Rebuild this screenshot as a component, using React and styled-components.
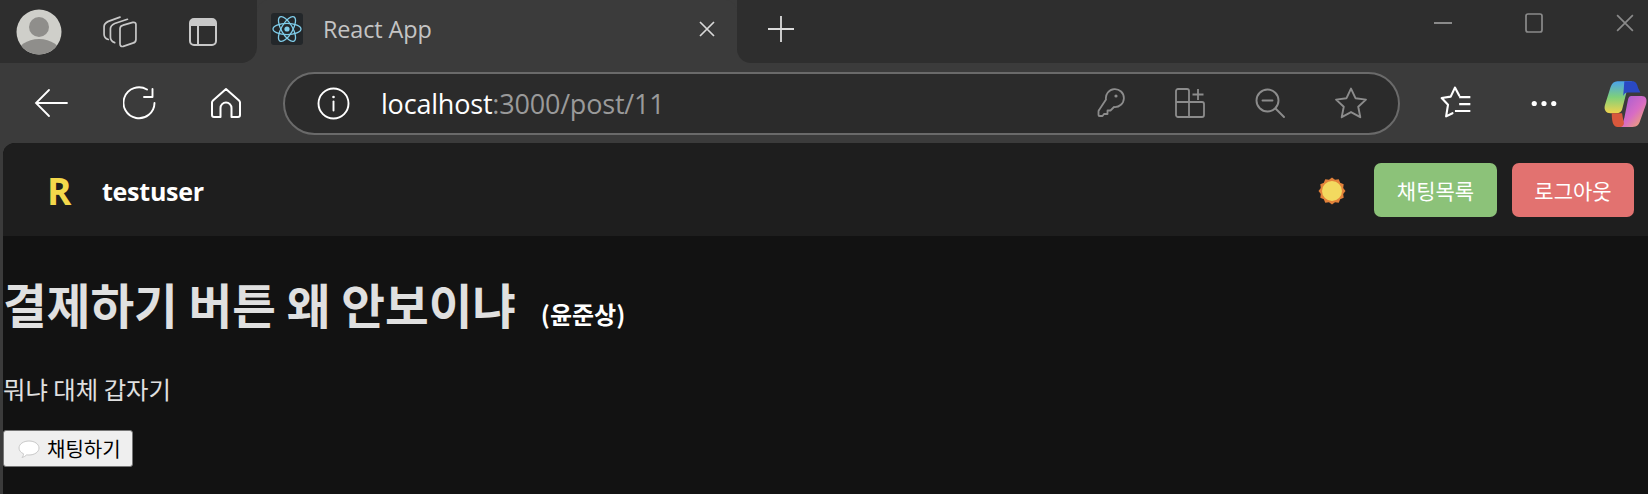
import React from "react";
import styled, { createGlobalStyle } from "styled-components";

const Global = createGlobalStyle`
  html, body { margin: 0; padding: 0; background: #3b3b3b; }
  body { font-family: "Noto Sans CJK KR", "Noto Sans", sans-serif; }
`;
const Window = styled.div`width: 1648px; height: 494px; overflow: hidden; display: flex; flex-direction: column; background: #3b3b3b;`;
const TabStrip = styled.div`height: 63px; flex: none; display: flex; align-items: stretch; background: #3b3b3b;`;
const StripLeft = styled.div`width: 257px; flex: none; background: #2e2e2e; border-bottom-right-radius: 16px; display: flex; align-items: center;`;
const StripIcon = styled.span`display: flex; margin-left: ${p => p.$ml}px;`;
const Tab = styled.div`width: 480px; flex: none; background: #3b3b3b; border-top-left-radius: 12px; border-top-right-radius: 12px; display: flex; align-items: center; padding: 0 22px 0 14px; box-sizing: border-box;`;
const Favicon = styled.span`width: 32px; height: 32px; margin-top: -6px; border-radius: 3px; background: #23272a; display: flex; align-items: center; justify-content: center;`;
const TabTitle = styled.span`font: 23.4px "Open Sans", sans-serif; color: #c4c4c4; margin-left: 20px; margin-top: -6px; flex: 1; letter-spacing: -0.1px;`;
const StripRight = styled.div`flex: 1; background: #2e2e2e; border-bottom-left-radius: 14px; display: flex; align-items: flex-start; position: relative;`;
const Toolbar = styled.div`height: 80px; flex: none; background: #3b3b3b; display: flex; align-items: center;`;
const ToolIcon = styled.span`display: flex; margin-left: ${p => p.$ml}px;`;
const Omnibox = styled.div`width: 1117px; height: 63px; margin-left: 42px; box-sizing: border-box; border: 2px solid #6a6a6a; border-radius: 32px; background: #2b2b2b; display: flex; align-items: center; padding-left: 32px;`;
const Url = styled.span`font: 27px "Open Sans", sans-serif; color: #fff; margin-left: 31px; flex: 1; letter-spacing: -0.2px;`;
const UrlDim = styled.span`color: #9a9a9a;`;
const Page = styled.div`flex: 1; margin-left: 3px; background: #121212; border-top-left-radius: 12px; overflow: hidden; display: flex; flex-direction: column;`;
const Header = styled.header`height: 93px; flex: none; background: #1e1e1e; display: flex; align-items: center; padding: 0 14px 0 44px; box-sizing: border-box;`;
const Logo = styled.span`font: 700 37px "Open Sans", sans-serif; color: #f4d84b; width: 55px; margin-top: 2px;`;
const User = styled.span`font: 700 25px "Open Sans", sans-serif; color: #fff; flex: 1; letter-spacing: -0.25px; margin-top: 2px;`;
const Sun = styled.span`display: flex; margin: 2px 28px 0 0;`;
const NavButton = styled.button`height: 54px; width: ${p => p.$w}px; margin-left: ${p => p.$ml}px; border: 0; border-radius: 7px; background: ${p => p.$bg}; color: #fff; font: 400 21px "Noto Sans CJK KR", sans-serif; padding: 0;`;
const Main = styled.main`padding: 0;`;
const Title = styled.h1`margin: 39px 0 0; font: 700 47.5px/58px "Noto Sans CJK KR", sans-serif; color: #e0e0e0; white-space: nowrap;`;
const Author = styled.small`font: 700 24px "Noto Sans CJK KR", sans-serif; color: #fff; margin-left: 14px;`;
const Body = styled.p`margin: 40px 0 0; font: 400 24.4px/32px "Noto Sans CJK KR", sans-serif; color: #e0e0e0;`;
const ChatButton = styled.button`margin-top: 25px; width: 130px; height: 37px; display: flex; align-items: center; padding: 0 0 0 14px; box-sizing: border-box; background: #efefef; border: 1px solid #767676; border-radius: 3px; color: #000; font: 400 20px "Noto Sans CJK KR", sans-serif; gap: 7px;`;

const S = { fill: "none", stroke: "currentColor", strokeLinecap: "round", strokeLinejoin: "round" };

const Avatar = () => <svg width="46" height="46" viewBox="0 0 46 46"><defs><clipPath id="av"><circle cx="23" cy="23" r="22.5" /></clipPath></defs><circle cx="23" cy="23" r="22.5" fill="#cfcfca" /><g clipPath="url(#av)"><circle cx="23" cy="18" r="10" fill="#8f8e8b" /><ellipse cx="23" cy="45" rx="22" ry="15" fill="#8f8e8b" /></g></svg>;
const Workspaces = () => <svg width="34" height="34" viewBox="1 2 32 30" style={{ color: "#c8c8c8" }} {...S} strokeWidth="1.6"><path d="M6 24 C3 23 2 21 2 19 V12 C2 9 4 8 6 7 L17 3 " /><path d="M12 27 C9 26 8 24 8 22 V14 C8 11 10 10 12 9 L24 5" /><path d="M17 14 C17 12 18 11 20 10.5 L29 8 C31.5 7.5 32 9 32 10 V24 C32 26 31 27 29 27.5 L20 30.5 C18 31 17 30 17 28 Z" /></svg>;
const Sidebar = () => <svg width="28" height="28" viewBox="0 0 28 28"><rect x="1" y="1" width="26" height="26" rx="4" fill="none" stroke="#c8c8c8" strokeWidth="2" /><path d="M1 5a4 4 0 0 1 4-4h18a4 4 0 0 1 4 4v3H1z" fill="#c8c8c8" /><path d="M9 8v19" stroke="#c8c8c8" strokeWidth="2" /></svg>;
const ReactIcon = () => <svg width="30" height="30" viewBox="-15 -15 30 30" fill="none" stroke="#7fcdea" strokeWidth="1.3"><ellipse rx="14" ry="5.6" /><ellipse rx="14" ry="5.6" transform="rotate(60)" /><ellipse rx="14" ry="5.6" transform="rotate(120)" /><circle r="2.6" fill="#7fcdea" stroke="none" /></svg>;
const CloseX = ({ size = 16, color = "#d8d8d8", w = 1.7 }) => <svg width={size} height={size} viewBox="0 0 16 16" stroke={color} strokeWidth={w}><path d="M1 1l14 14M15 1L1 15" /></svg>;
const Plus = () => <svg width="28" height="28" viewBox="0 0 28 28" stroke="#dcdcdc" strokeWidth="1.8"><path d="M14 1v26M1 14h26" /></svg>;
const Back = () => <svg width="34" height="30" viewBox="0 0 34 30" stroke="#fff" strokeWidth="1.8" fill="none" strokeLinecap="round"><path d="M33 15H2M15 2L2 15l13 13" /></svg>;
const Reload = () => <svg width="34" height="34" viewBox="0 0 34 34" stroke="#fff" strokeWidth="1.9" fill="none" strokeLinecap="round" strokeLinejoin="round"><path d="M24 3.500A15.500 15.500 0 1 0 31.500 17" /><path d="M29.500 3v8H21" /></svg>;
const Home = () => <svg width="30" height="32" viewBox="0 0 30 32" stroke="#fff" strokeWidth="2" fill="none" strokeLinejoin="round"><path d="M15 2L2 13.500a3 3 0 0 0-1 2.500V28a2 2 0 0 0 2 2h6.500V21a5.500 5.500 0 0 1 11 0v9H27a2 2 0 0 0 2-2V16a3 3 0 0 0-1-2.500z" /></svg>;
const Info = () => <svg width="33" height="33" viewBox="0 0 33 33" fill="none" stroke="#fff" strokeWidth="1.9"><circle cx="16.500" cy="16.500" r="15" /><path d="M16.500 14.500v9" strokeLinecap="round" /><circle cx="16.500" cy="10" r="1.300" fill="#fff" stroke="none" /></svg>;
const Key = () => <svg width="28" height="30" viewBox="0 0 28 30" fill="none" stroke="#8c8c8c" strokeWidth="1.800" strokeLinejoin="round"><path d="M9 11.500a9 9 0 1 1 8 7.500l-3.500 3.500H10.500V26H7l-1.500 2H2.500a1 1 0 0 1-1-1v-3.500a2 2 0 0 1 .6-1.500z" /><circle cx="19" cy="8" r="1.600" fill="#8c8c8c" stroke="none" /></svg>;
const Apps = () => <svg width="30" height="30" viewBox="0 0 30 30" fill="none" stroke="#8c8c8c" strokeWidth="1.800"><path d="M3 1h9a2 2 0 0 1 2 2v11H1V3a2 2 0 0 1 2-2zM1 14h13v15H3a2 2 0 0 1-2-2zM14 14h13a2 2 0 0 1 2 2v11a2 2 0 0 1-2 2H14z" /><path d="M23 1v11M17.500 6.500h11" /></svg>;
const ZoomOut = () => <svg width="30" height="30" viewBox="0 0 30 30" fill="none" stroke="#8c8c8c" strokeWidth="1.900" strokeLinecap="round"><circle cx="12.500" cy="12.500" r="11" /><path d="M7.500 12.500h10M20.500 20.500l8.500 8.500" /></svg>;
const Star = ({ color = "#8c8c8c" }) => <svg width="32" height="32" viewBox="0 0 30 30" fill="none" stroke={color} strokeWidth="1.800" strokeLinejoin="round"><path d="M15 1.500l4.200 9 9.800 1.300-7.200 6.700 1.900 9.800L15 23.500l-8.700 4.800 1.900-9.800L1 11.800l9.800-1.300z" /></svg>;
const Favs = () => <svg width="32" height="34" viewBox="0 0 30 32" fill="none" stroke="#fff" strokeWidth="2" strokeLinejoin="round"><path d="M14 1.500l-4 8.500-8.500 1.300 6 6.300-1.800 11 6-3M14 1.500l4 7.500" strokeLinecap="round" /><path d="M18 10.500h10.500M18 17h10.500M14 23.500h14.500" /></svg>;
const More = () => <svg width="26" height="7" viewBox="0 0 24 6" fill="#fff"><circle cx="3" cy="3" r="2.400" /><circle cx="12" cy="3" r="2.400" /><circle cx="21" cy="3" r="2.400" /></svg>;
const Copilot = () => <svg width="45" height="47" viewBox="0 0 38 41"><defs><linearGradient id="cpl" x1="0" y1="0" x2="0" y2="1"><stop offset="0" stopColor="#4aa3ee" /><stop offset=".5" stopColor="#7fd07a" /><stop offset="1" stopColor="#f0d34e" /></linearGradient><linearGradient id="cpr" x1="0" y1="0" x2="1" y2="1"><stop offset="0" stopColor="#9b5bd6" /><stop offset=".55" stopColor="#d86cc4" /><stop offset="1" stopColor="#f5b55a" /></linearGradient></defs><path d="M12 1h13c-3 2-4 5-5 9l-4 16c-1 2-2 3-5 3H6c-4 0-6-3-5-7l5-16c1-3 3-5 6-5z" fill="url(#cpl)" /><path d="M18 1h7c3 0 4 2 5 6l2 4h-11c-2 0-3 1-4 3z" fill="#2a49c4" /><path d="M24 14h9c4 0 5 3 4 7l-5 14c-1 4-3 6-7 6H13c3-2 4-4 5-8l3-15c.5-3 1.500-4 3-4z" fill="url(#cpr)" /><path d="M7 29h9l1 6c1 3 1 5-2 6h-3c-3 0-5-3-5-12z" fill="#d8583c" /></svg>;
const SunIcon = () => {
  const n = 12, pts = [];
  for (let i = 0; i < n * 2; i++) { const r = i % 2 ? 11.6 : 13.5; const a = i * Math.PI / n; pts.push(`${14 + r * Math.cos(a)},${14 + r * Math.sin(a)}`); }
  return <svg width="28" height="28" viewBox="0 0 28 28"><polygon points={pts.join(" ")} fill="#e3823a" /><circle cx="14" cy="14" r="10" fill="#f3d95f" /></svg>;
};
const Bubble = () => <svg width="22" height="20" viewBox="0 0 22 20"><path d="M11 2c5.500 0 10 3 10 7s-4.500 7-10 7c-.8 0-1.500 0-2.200-.2C7.500 17 6 18 4 18.500c1-1.200 1.500-2.300 1.500-3.700C2.800 13.500 1 11.500 1 9c0-4 4.500-7 10-7z" fill="#fff" stroke="#c9c9c9" strokeWidth="1" /></svg>;

const WinControls = styled.div`position: absolute; top: 13px; right: 0; display: flex; align-items: center; height: 20px;`;
const TabClose = styled.span`display: flex; margin-top: -6px;`;
const NewTab = styled.span`display: flex; margin: 15px 0 0 30px;`;
const WinBtn = styled.span`display: flex; margin-right: ${p => p.$mr}px;`;

export default function App() {
  return (
    <Window>
      <Global />
      <TabStrip>
        <StripLeft>
          <StripIcon $ml={16}><Avatar /></StripIcon>
          <StripIcon $ml={41}><Workspaces /></StripIcon>
          <StripIcon $ml={52}><Sidebar /></StripIcon>
        </StripLeft>
        <Tab>
          <Favicon><ReactIcon /></Favicon>
          <TabTitle>React App</TabTitle>
          <TabClose><CloseX /></TabClose>
        </Tab>
        <StripRight>
          <NewTab><Plus /></NewTab>
          <WinControls>
            <WinBtn $mr={73}><svg width="18" height="2" viewBox="0 0 18 2"><path d="M0 1h18" stroke="#8a8a8a" strokeWidth="2" /></svg></WinBtn>
            <WinBtn $mr={73}><svg width="18" height="20" viewBox="0 0 18 20"><rect x="1" y="1" width="16" height="18" rx="2" fill="none" stroke="#8a8a8a" strokeWidth="1.700" /></svg></WinBtn>
            <WinBtn $mr={14}><CloseX size={18} color="#8a8a8a" w={1.500} /></WinBtn>
          </WinControls>
        </StripRight>
      </TabStrip>
      <Toolbar>
        <ToolIcon $ml={34}><Back /></ToolIcon>
        <ToolIcon $ml={55}><Reload /></ToolIcon>
        <ToolIcon $ml={54}><Home /></ToolIcon>
        <Omnibox>
          <Info />
          <Url>localhost<UrlDim>:3000/post/11</UrlDim></Url>
          <ToolIcon $ml={0}><Key /></ToolIcon>
          <ToolIcon $ml={50}><Apps /></ToolIcon>
          <ToolIcon $ml={50}><ZoomOut /></ToolIcon>
          <ToolIcon $ml={50}><Star /></ToolIcon>
          <ToolIcon $ml={31}><span /></ToolIcon>
        </Omnibox>
        <ToolIcon $ml={40}><Favs /></ToolIcon>
        <ToolIcon $ml={59}><More /></ToolIcon>
        <ToolIcon $ml={46}><Copilot /></ToolIcon>
      </Toolbar>
      <Page>
        <Header>
          <Logo>R</Logo>
          <User>testuser</User>
          <Sun><SunIcon /></Sun>
          <NavButton $w={123} $bg="#8cc279">채팅목록</NavButton>
          <NavButton $w={122} $ml={15} $bg="#e27270">로그아웃</NavButton>
        </Header>
        <Main>
          <Title>결제하기 버튼 왜 안보이냐 <Author>(윤준상)</Author></Title>
          <Body>뭐냐 대체 갑자기</Body>
          <ChatButton><Bubble />채팅하기</ChatButton>
        </Main>
      </Page>
    </Window>
  );
}
